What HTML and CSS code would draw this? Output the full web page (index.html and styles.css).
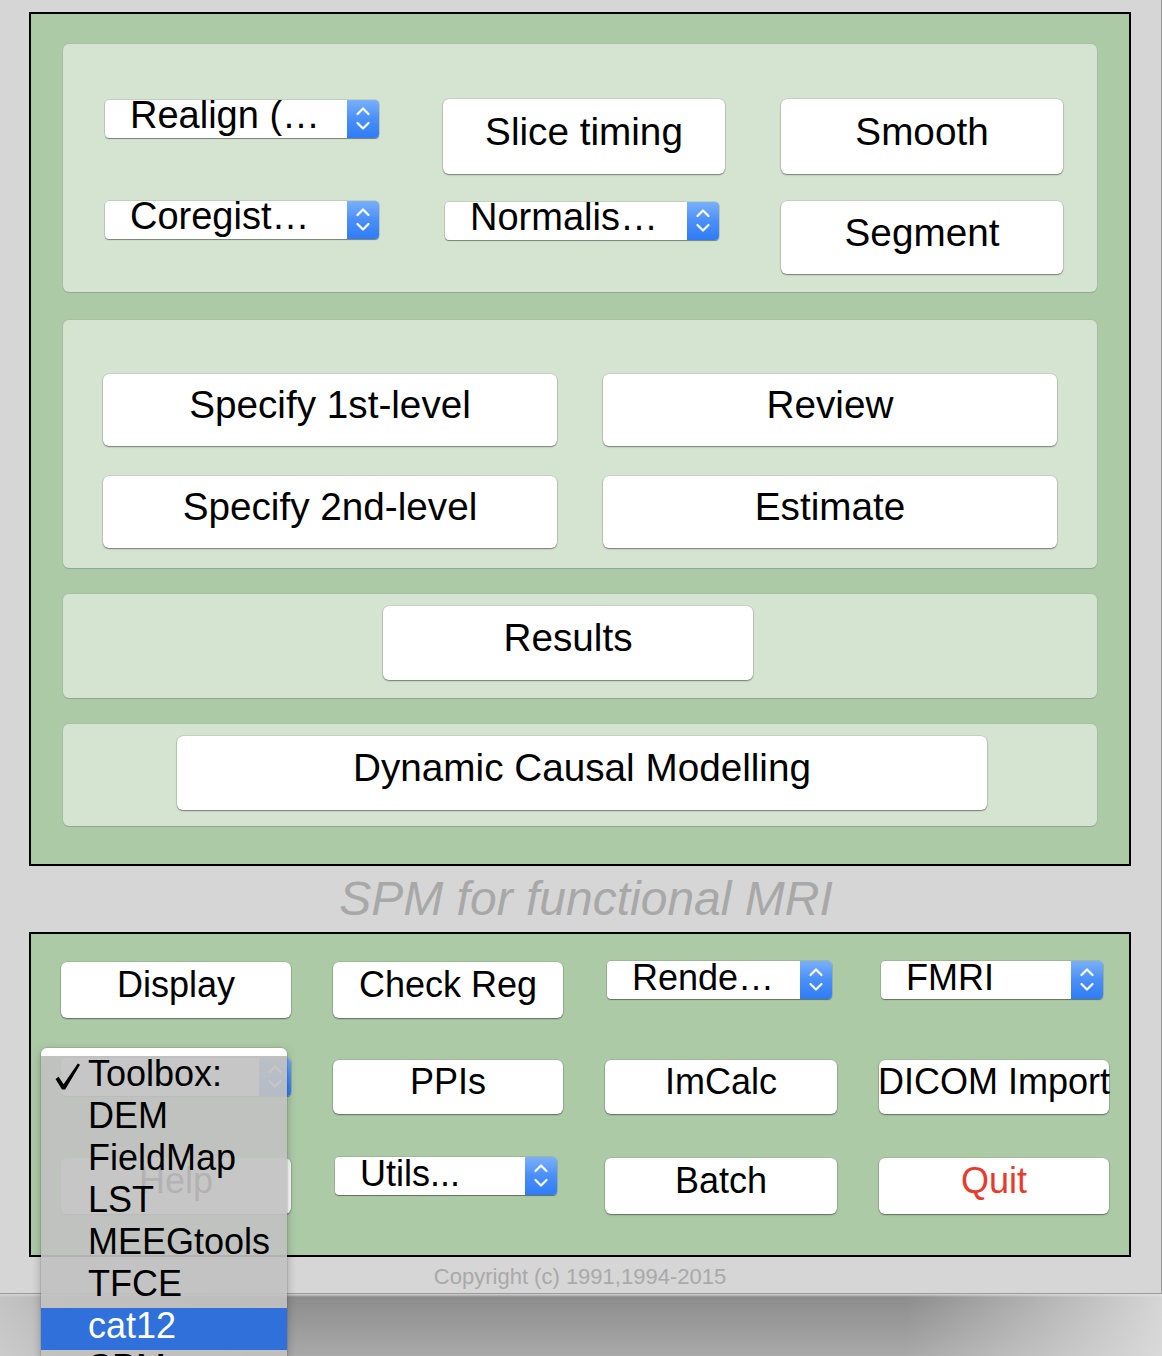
FILE: index.html
```html
<!DOCTYPE html>
<html>
<head>
<meta charset="utf-8">
<title>SPM for functional MRI</title>
<link rel="stylesheet" href="styles.css">
</head>
<body>
<div class="window">
  <div class="box box-top">
    <div class="panel panel-spatial">
      <div class="popup popup-lg"><span class="popup-label">Realign (…</span><span class="popup-arrows"><svg width="32" height="38" viewBox="0 0 32 38"><path d="M10.5 14 L16 8.5 L21.5 14 M10.5 23 L16 28.5 L21.5 23" fill="none" stroke="#fff" stroke-width="2.2" stroke-linecap="round" stroke-linejoin="round"/></svg></span></div>
      <div class="btn btn-lg">Slice timing</div>
      <div class="btn btn-lg">Smooth</div>
      <div class="popup popup-lg popup-row2"><span class="popup-label">Coregist…</span><span class="popup-arrows"><svg width="32" height="38" viewBox="0 0 32 38"><path d="M10.5 14 L16 8.5 L21.5 14 M10.5 23 L16 28.5 L21.5 23" fill="none" stroke="#fff" stroke-width="2.2" stroke-linecap="round" stroke-linejoin="round"/></svg></span></div>
      <div class="popup popup-lg popup-norm"><span class="popup-label">Normalis…</span><span class="popup-arrows"><svg width="32" height="38" viewBox="0 0 32 38"><path d="M10.5 14 L16 8.5 L21.5 14 M10.5 23 L16 28.5 L21.5 23" fill="none" stroke="#fff" stroke-width="2.2" stroke-linecap="round" stroke-linejoin="round"/></svg></span></div>
      <div class="btn btn-lg btn-segment">Segment</div>
    </div>
    <div class="panel panel-model">
      <div class="btn btn-lg">Specify 1st-level</div>
      <div class="btn btn-lg">Review</div>
      <div class="btn btn-lg">Specify 2nd-level</div>
      <div class="btn btn-lg">Estimate</div>
    </div>
    <div class="panel panel-results">
      <div class="btn btn-lg btn-results">Results</div>
    </div>
    <div class="panel panel-dcm">
      <div class="btn btn-lg btn-dcm">Dynamic Causal Modelling</div>
    </div>
  </div>

  <div class="title">SPM for functional MRI</div>

  <div class="box box-bottom">
    <div class="btn btn-sm">Display</div>
    <div class="btn btn-sm">Check Reg</div>
    <div class="popup popup-sm popup-render"><span class="popup-label">Rende…</span><span class="popup-arrows"><svg width="32" height="38" viewBox="0 0 32 38"><path d="M10.5 14 L16 8.5 L21.5 14 M10.5 23 L16 28.5 L21.5 23" fill="none" stroke="#fff" stroke-width="2.2" stroke-linecap="round" stroke-linejoin="round"/></svg></span></div>
    <div class="popup popup-sm popup-fmri"><span class="popup-label">FMRI</span><span class="popup-arrows"><svg width="32" height="38" viewBox="0 0 32 38"><path d="M10.5 14 L16 8.5 L21.5 14 M10.5 23 L16 28.5 L21.5 23" fill="none" stroke="#fff" stroke-width="2.2" stroke-linecap="round" stroke-linejoin="round"/></svg></span></div>

    <div class="popup popup-sm popup-toolbox"><span class="popup-label"></span><span class="popup-arrows"><svg width="32" height="38" viewBox="0 0 32 38"><path d="M10.5 14 L16 8.5 L21.5 14 M10.5 23 L16 28.5 L21.5 23" fill="none" stroke="#fff" stroke-width="2.2" stroke-linecap="round" stroke-linejoin="round"/></svg></span></div>
    <div class="btn btn-sm btn-short">PPIs</div>
    <div class="btn btn-sm btn-short">ImCalc</div>
    <div class="btn btn-sm btn-short">DICOM Import</div>

    <div class="btn btn-sm">Help</div>
    <div class="popup popup-sm popup-utils"><span class="popup-label">Utils...</span><span class="popup-arrows"><svg width="32" height="38" viewBox="0 0 32 38"><path d="M10.5 14 L16 8.5 L21.5 14 M10.5 23 L16 28.5 L21.5 23" fill="none" stroke="#fff" stroke-width="2.2" stroke-linecap="round" stroke-linejoin="round"/></svg></span></div>
    <div class="btn btn-sm">Batch</div>
    <div class="btn btn-sm btn-quit">Quit</div>
  </div>

  <div class="copyright">Copyright (c) 1991,1994-2015</div>

  <div class="menu">
    <div class="menu-top"></div>
    <div class="menu-item"><svg class="check" width="26" height="28" viewBox="0 0 26 28"><path d="M0.5 16 L3.5 13.8 L8.6 21.2 L22.8 0.6 L25 1.8 L10.2 26.6 L7 26.6 Z" fill="#000"/></svg>Toolbox:</div>
    <div class="menu-item">DEM</div>
    <div class="menu-item">FieldMap</div>
    <div class="menu-item">LST</div>
    <div class="menu-item">MEEGtools</div>
    <div class="menu-item">TFCE</div>
    <div class="menu-item menu-item-selected">cat12</div>
    <div class="menu-item">SPM</div>
  </div>
</div>
</body>
</html>
```

FILE: styles.css
```css
* {
  box-sizing: border-box;
}

html, body {
  margin: 0;
  padding: 0;
  width: 1162px;
  height: 1356px;
  overflow: hidden;
}

body {
  font-family: "Liberation Sans", Arial, sans-serif;
  color: #000;
  background-color: #9a9a9a;
  background-image:
    linear-gradient(to right, rgba(214,214,214,0.75) 0, rgba(214,214,214,0) 22%, rgba(214,214,214,0) 78%, rgba(226,226,226,0.85) 100%),
    linear-gradient(to bottom, #d6d6d6 0, #d6d6d6 1294px, #8d8d8d 1297px, #a9a9a9 1356px);
}

.window {
  position: relative;
  width: 1162px;
  height: 1294px;
  background: #d6d6d6;
  border-right: 1px solid #9c9c9c;
  border-bottom: 1px solid #9a9a9a;
  padding: 12px 0 0 29px;
}

.box {
  width: 1102px;
  border: 2px solid #000;
  background: #adcaa7;
}

.box-top {
  height: 854px;
  padding: 30px 32px 0 32px;
  display: flex;
  flex-direction: column;
  gap: 26px;
}

.panel {
  background: #d5e4d1;
  border-radius: 6px;
  box-shadow: 0 1px 1px rgba(0,0,0,0.14), 0 0 0 1px rgba(0,0,0,0.035);
  flex: none;
}

.panel-spatial {
  height: 248px;
  margin-bottom: 2px;
  padding: 55px 0 0 42px;
  display: grid;
  grid-template-columns: 282px 282px 282px;
  grid-template-rows: 75px 75px;
  column-gap: 56px;
  row-gap: 27px;
}

.panel-model {
  height: 248px;
  padding: 54px 0 0 40px;
  display: grid;
  grid-template-columns: 454px 454px;
  grid-template-rows: 72px 72px;
  column-gap: 46px;
  row-gap: 30px;
}

.panel-results {
  height: 104px;
  padding: 12px 0 0 320px;
}

.panel-dcm {
  height: 102px;
  padding: 12px 0 0 114px;
}

/* buttons */
.btn {
  background: #fff;
  border-radius: 6px;
  box-shadow: 0 1px 1.5px rgba(0,0,0,0.42), 0 0 0 0.5px rgba(0,0,0,0.14);
  display: flex;
  align-items: center;
  justify-content: center;
  white-space: nowrap;
  padding-bottom: 10px;
}

.btn-lg {
  font-size: 38.7px;
  line-height: 38px;
}

.btn-sm {
  font-size: 36px;
  line-height: 36px;
}

.btn-segment {
  height: 73px;
  align-self: start;
}

.btn-results {
  width: 370px;
  height: 74px;
}

.btn-dcm {
  width: 810px;
  height: 74px;
}

.btn-short {
  height: 54px;
  align-self: start;
}

.btn-quit {
  color: #e63b2d;
}

/* popup menus */
.popup {
  display: flex;
  height: 38px;
  background: #fff;
  border-radius: 4px;
  box-shadow: 0 1px 1px rgba(0,0,0,0.38), 0 0 0 0.5px rgba(0,0,0,0.18);
  align-self: start;
}

.popup-label {
  flex: 1;
  min-width: 0;
  white-space: nowrap;
  padding-left: 25px;
}

.popup-lg .popup-label {
  font-size: 38px;
  line-height: 30px;
}

.popup-sm .popup-label {
  font-size: 36px;
  line-height: 33px;
}

.popup-arrows {
  flex: none;
  width: 32px;
  height: 38px;
  background: linear-gradient(to bottom, #79b0fa 0%, #4a8ff8 50%, #2e7cf6 100%);
  border-radius: 0 4px 4px 0;
}

.popup-arrows svg {
  display: block;
}

.panel-spatial .popup-lg {
  width: 274px;
  margin-top: 1px;
}

.panel-spatial .popup-row2 {
  margin-top: 0;
}

.panel-spatial .popup-norm {
  margin-left: 2px;
  margin-top: 1px;
}

.title {
  width: 1102px;
  height: 66px;
  padding-left: 12px;
  text-align: center;
  font-size: 48px;
  line-height: 66px;
  font-style: italic;
  color: #a8a8a8;
}

.box-bottom {
  height: 325px;
  padding: 28px 0 0 30px;
  display: grid;
  grid-template-columns: 230px 230px 232px 230px;
  grid-template-rows: 56px 56px 56px;
  column-gap: 42px;
  row-gap: 42px;
}

.popup-render {
  width: 225px;
  margin: -1px 0 0 2px;
}

.popup-fmri {
  width: 222px;
  margin: -1px 0 0 2px;
}

.popup-utils {
  width: 222px;
  margin: -1px 0 0 2px;
}

.popup-toolbox {
  width: 230px;
  margin-top: -2px;
}

.copyright {
  width: 1102px;
  height: 36px;
  padding-top: 2px;
  text-align: center;
  font-size: 22px;
  line-height: 36px;
  color: #a9a9a9;
}

/* open popup menu */
.menu {
  position: absolute;
  left: 41px;
  top: 1048px;
  width: 246px;
  height: 308px;
  overflow: hidden;
  border-radius: 6px 6px 0 0;
  background: rgba(193,193,193,0.92);
  box-shadow: 0 3px 10px rgba(0,0,0,0.28), 0 0 0 0.5px rgba(0,0,0,0.15);
}

.menu-top {
  height: 8px;
  background: #fff;
}

.menu-item {
  position: relative;
  height: 42px;
  padding: 2px 0 8px 47px;
  font-size: 36px;
  line-height: 32px;
  white-space: nowrap;
  color: #000;
}

.menu-item-selected {
  background: #2f70da;
  color: #fff;
}

.check {
  position: absolute;
  left: 14px;
  top: 7px;
}
```
